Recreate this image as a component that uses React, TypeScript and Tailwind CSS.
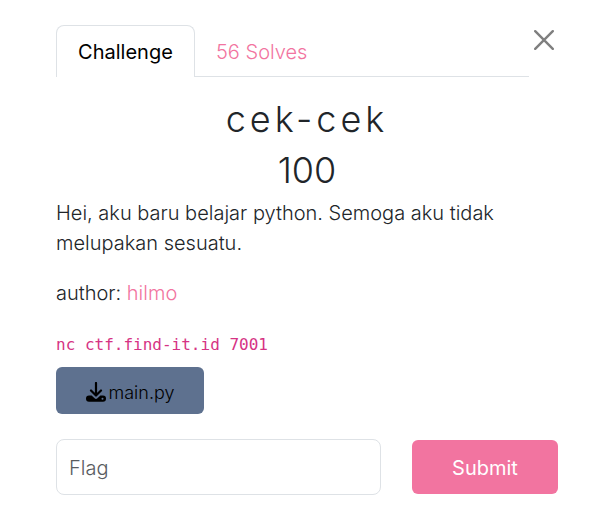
import React from "react";

function DownloadIcon() {
  return (
    <svg aria-hidden="true" viewBox="0 0 20 20" className="mb-0.5 size-5 shrink-0">
      <path d="M10 1v12M5 8.500l5 5 5-5" fill="none" stroke="currentColor" strokeWidth="2.200" strokeLinecap="round" strokeLinejoin="round" />
      <path
        fillRule="evenodd"
        fill="currentColor"
        d="M3 13.500h2.600l3 2.700a2 2 0 0 0 2.800 0l3-2.700H17a3 3 0 0 1 3 3v.2a3 3 0 0 1-3 3H3a3 3 0 0 1-3-3v-.2a3 3 0 0 1 3-3ZM16.500 15.800a1 1 0 1 0 0 2 1 1 0 0 0 0-2Z"
      />
    </svg>
  );
}

function CloseIcon() {
  return (
    <svg aria-hidden="true" viewBox="0 0 20 20" className="size-5">
      <path d="M1.200 1.200 18.800 18.800M18.800 1.200 1.200 18.800" stroke="currentColor" strokeWidth="2.400" strokeLinecap="round" />
    </svg>
  );
}

export default function App() {
  return (
    <main className="bg-white px-14 pt-[25px] pb-6 font-['Inter','Liberation_Sans',sans-serif] text-xl leading-[30px] font-light text-[#212529]">
      <header className="flex items-start">
        <nav className="flex flex-1 border-b border-[#dee2e6]">
          <button type="button" className="-mb-px h-[52px] w-[139px] rounded-t-lg border border-b-0 border-[#dee2e6] bg-white text-center font-normal text-black">
            Challenge
          </button>
          <button type="button" className="h-[51px] px-[21px] pt-0.5 text-[#f274a0]">
            56 Solves
          </button>
        </nav>
        <button type="button" aria-label="Close" className="mt-[5px] mr-1 ml-[5px] text-[#7f7f7f]">
          <CloseIcon />
        </button>
      </header>

      <h2 className="mt-5 text-center text-4xl leading-[44px] font-light tracking-[4px]">
        cek-cek
      </h2>
      <h3 className="mt-2 text-center text-4xl leading-[42px] font-light">100</h3>

      <p className="mt-[7px]">Hei, aku baru belajar python. Semoga aku tidak melupakan sesuatu.</p>
      <p className="mt-5">
        author:{" "}
        <a href="#hilmo" className="text-[#f274a0]">
          hilmo
        </a>
      </p>
      <p className="mt-5">
        <code className="font-['DejaVu_Sans_Mono',monospace] text-base leading-[30px] font-normal text-[#d63384]">nc ctf.find-it.id 7001</code>
      </p>

      <a href="#main.py" className="mt-[7px] flex h-[47px] w-[148px] items-center justify-center gap-[3px] rounded-md bg-[#5e718f] pt-1 text-lg text-black">
        <DownloadIcon />
        main.py
      </a>

      <form className="mt-[25px] flex items-center gap-[31px]" onSubmit={(event) => event.preventDefault()}>
        <input
          type="text"
          aria-label="Flag"
          placeholder="Flag"
          className="h-14 min-w-0 flex-1 rounded-lg border border-[#dee2e6] bg-white px-3 pt-0.5 placeholder:text-[#595c5f]"
        />
        <button type="submit" className="h-[54px] w-[146px] rounded-md bg-[#f274a0] pt-0.5 font-normal text-white">
          Submit
        </button>
      </form>
    </main>
  );
}
